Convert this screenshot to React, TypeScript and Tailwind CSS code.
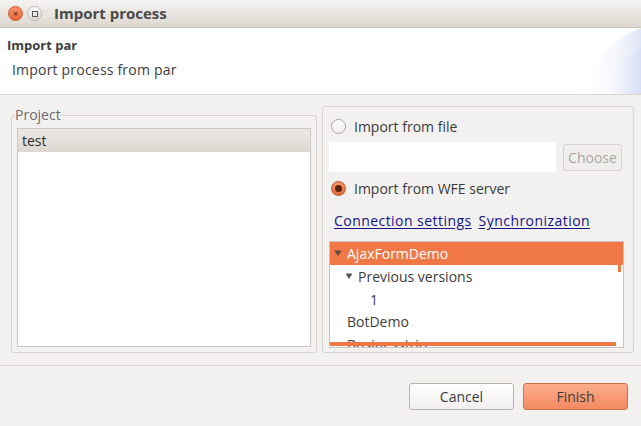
import React from "react";

const font = { fontFamily: '"Open Sans", "DejaVu Sans", sans-serif' };

function Radio({ checked }: { checked?: boolean }) {
  if (checked) {
    return (
      <span className="flex h-[15px] w-[15px] items-center justify-center rounded-full border border-[#b9532b] bg-gradient-to-b from-[#f6946a] to-[#e4693a]">
        <span className="h-[7px] w-[7px] rounded-full bg-[#5a2412]" />
      </span>
    );
  }
  return <span className="h-[15px] w-[15px] rounded-full border border-[#a8a29b] bg-gradient-to-b from-white to-[#f0eeec]" />;
}

function Tri({ color }: { color: string }) {
  return (
    <svg width="8" height="7" viewBox="0 0 8 7">
      <path d="M0.5 0.5 L7.5 0.5 L4 6 Z" fill={color} />
    </svg>
  );
}

export default function App() {
  return (
    <div style={font} className="flex h-[426px] w-[641px] flex-col overflow-hidden bg-[#f2f1f0] text-[#3c3c3c]">
      {/* Title bar */}
      <div className="flex h-[28px] shrink-0 items-center rounded-t-[5px] border-b border-[#cfc8c1] bg-gradient-to-b from-[#f4f3f1] to-[#dcd6cf] pl-[8px]">
        <span className="flex h-[15px] w-[15px] items-center justify-center rounded-full border border-[#c9582c] bg-gradient-to-b from-[#f7936a] to-[#e9673a] text-[9px] leading-none text-[#4a1f10]">
          ×
        </span>
        <span className="ml-[4px] flex h-[15px] w-[15px] items-center justify-center rounded-full border border-[#bdb7b0] bg-gradient-to-b from-[#fbfaf9] to-[#dedad5]">
          <span className="h-[6px] w-[6px] border border-[#555]" />
        </span>
        <span className="ml-[12px] text-[15px] font-bold text-[#4a4a4a]">Import process</span>
      </div>

      {/* Header */}
      <div className="relative h-[67px] shrink-0 border-b border-[#d8d4d0] bg-white">
        <div className="pl-[7px] pt-[8px] text-[13px] font-bold leading-[18px] text-[#3c3c3c]">Import par</div>
        <div className="pl-[12px] pt-[6px] text-[14px] leading-[20px] tracking-[0.2px] text-[#3c3c3c]">Import process from par</div>
        <svg className="absolute right-0 top-0" width="60" height="66" viewBox="0 0 60 66">
          <defs>
            <linearGradient id="g1" x1="0" y1="0" x2="1" y2="0">
              <stop offset="0" stopColor="#ffffff" stopOpacity="0" />
              <stop offset="1" stopColor="#dfe5f6" />
            </linearGradient>
            <linearGradient id="g2" x1="0" y1="0" x2="1" y2="0">
              <stop offset="0" stopColor="#ffffff" stopOpacity="0" />
              <stop offset="1" stopColor="#d7def4" />
            </linearGradient>
          </defs>
          <path d="M0 66 C10 35 30 10 60 0 L60 66 Z" fill="url(#g1)" />
          <path d="M22 66 C30 45 42 28 60 20 L60 66 Z" fill="url(#g2)" />
        </svg>
      </div>

      {/* Body */}
      <div className="flex min-h-0 flex-1 gap-[5px] pl-[11px] pr-[7px] pt-[11px] pb-[12px]">
        <fieldset className="m-0 flex min-h-0 w-[306px] flex-col rounded-[3px] border border-[#d6d2cd] px-[5px] pb-[5px] pt-0">
          <legend className="ml-[-2px] px-0 text-[14px] leading-[18px] text-[#6b6b6b]">Project</legend>
          <div className="mt-[4px] min-h-0 flex-1 border border-[#cdc8c2] bg-white">
            <div className="flex h-[23px] items-center bg-gradient-to-b from-[#ebe8e4] to-[#dcd7d1] pl-[4px] text-[14px] text-[#2e2e2e]">
              test
            </div>
          </div>
        </fieldset>

        <div className="flex min-h-0 w-[312px] flex-col rounded-[3px] border border-[#d6d2cd] pl-[6px] pr-[6px] pb-[4px]">
          <div className="mt-[11px] flex h-[17px] shrink-0 items-center gap-[8px] pl-[2px] text-[14px] text-[#3c3c3c]">
            <Radio />
            <span>Import from file</span>
          </div>
          <div className="mt-[7px] flex shrink-0 items-center gap-[7px]">
            <div className="h-[30px] w-[227px] bg-white" />
            <div className="flex h-[27px] w-[59px] items-center justify-center rounded-[3px] border border-[#d8d4cf] bg-[#f0eeec] text-[14px] text-[#a9a6a2]">
              Choose
            </div>
          </div>
          <div className="mt-[8px] flex h-[17px] shrink-0 items-center gap-[8px] pl-[2px] text-[14px] text-[#3c3c3c]">
            <Radio checked />
            <span>Import from WFE server</span>
          </div>
          <div className="mt-[14px] flex h-[18px] shrink-0 items-center gap-[7px] pl-[5px] text-[14px] tracking-[0.45px] text-[#12128a]">
            <span className="underline underline-offset-[2px]">Connection settings</span>
            <span className="underline underline-offset-[2px]">Synchronization</span>
          </div>
          <div className="relative mr-[3px] mt-[12px] min-h-0 flex-1 overflow-hidden border border-[#c9c4be] bg-white text-[14px]">
            <div className="flex h-[23px] items-center bg-[#f07746] pl-[4px] text-white">
              <Tri color="#5e4a40" />
              <span className="ml-[5px]">AjaxFormDemo</span>
            </div>
            <div className="flex h-[23px] items-center pl-[15px] text-[#3c3c3c]">
              <Tri color="#555" />
              <span className="ml-[5px]">Previous versions</span>
            </div>
            <div className="flex h-[22px] items-center pl-[40px] text-[#3c3c3c]">1</div>
            <div className="flex h-[23px] items-center pl-[17px] text-[#3c3c3c]">BotDemo</div>
            <div className="flex h-[23px] items-center pl-[17px] text-[#3c3c3c]">Businesstrip</div>
            <div className="absolute right-[2px] top-[22px] h-[8px] w-[3px] bg-[#f07746]" />
            <div className="absolute bottom-[1px] left-0 right-[7px] h-[4px] bg-[#f07746]" />
          </div>
        </div>
      </div>

      {/* Footer */}
      <div className="flex h-[61px] shrink-0 items-start justify-end gap-[9px] border-t border-[#dcd8d4] pr-[13px] pt-[17px]">
        <button className="flex h-[27px] w-[105px] items-center justify-center rounded-[3px] border border-[#b9b3ac] bg-gradient-to-b from-white to-[#f1efed] text-[14px] text-[#3c3c3c]">
          Cancel
        </button>
        <button className="flex h-[27px] w-[105px] items-center justify-center rounded-[3px] border border-[#c9734f] bg-gradient-to-b from-[#fbac8a] to-[#f38a62] text-[14px] text-[#3c3c3c]">
          Finish
        </button>
      </div>
    </div>
  );
}
